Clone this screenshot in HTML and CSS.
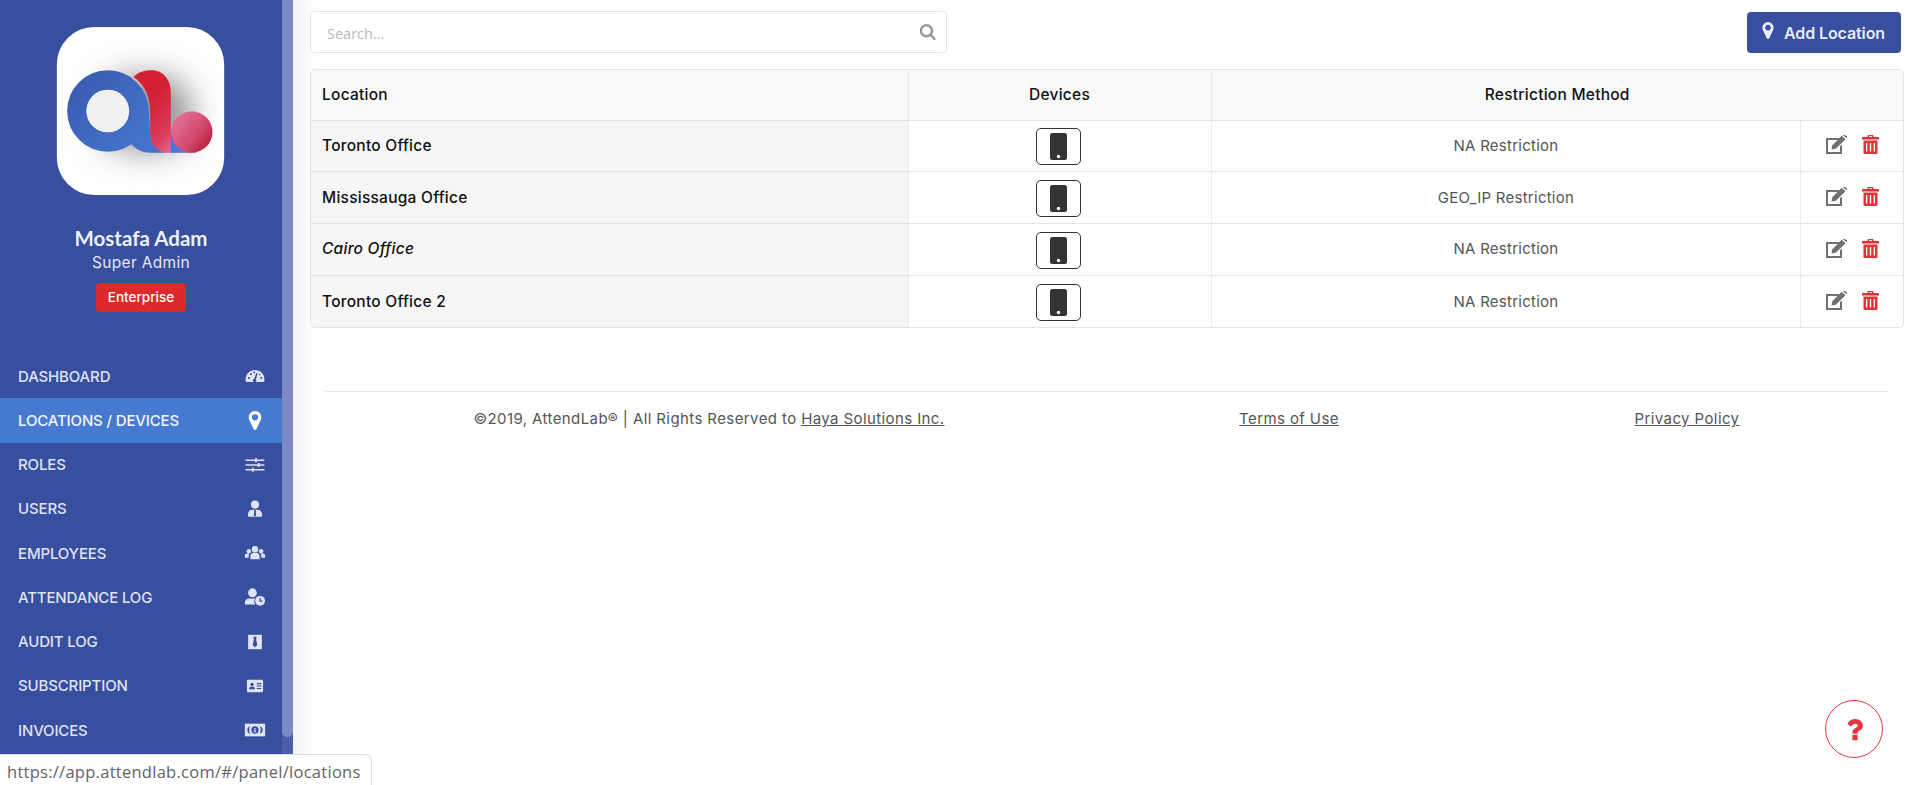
FILE: index.html
```html
<!DOCTYPE html>
<html lang="en">
<head>
<meta charset="utf-8">
<title>AttendLab - Locations</title>
<link rel="stylesheet" href="styles.css">
</head>
<body>
<svg class="defs" width="0" height="0" aria-hidden="true">
  <symbol id="i-marker" viewBox="384 128 1024 1536"><path d="M1152 640q0-106-75-181t-181-75-181 75-75 181 75 181 181 75 181-75 75-181zm256 0q0 109-33 179l-364 774q-16 33-47.500 52t-67.500 19-67.500-19-46.500-52l-365-774q-33-70-33-179 0-212 150-362t362-150 362 150 150 362z"/></symbol>
  <symbol id="i-edit" viewBox="0 0 21 19"><path class="edit-box" d="M13.500 4H1v14h14V10.500"/><path d="M5.500 14.500l.6-4L15.600.8l3.900 3.400-9.700 9.600zM16.700 0l3.800 3.300.5-.6c.2-.5.100-1-.3-1.400L18.800-.1c-.4-.3-.9-.3-1.300.1z"/></symbol>
  <symbol id="i-trash" viewBox="0 0 17 19"><path fill-rule="evenodd" d="M5.500 2V1C5.500.4 6 0 6.500 0h4c.6 0 1 .4 1 1v1H16c.6 0 1 .4 1 1v1.500H0V3c0-.6.4-1 1-1zM7 2h3V1.300H7zM1.500 5.500h14V18c0 .6-.4 1-1 1h-12c-.6 0-1-.4-1-1zM4 8v8.500h1.300V8zM7.800 8v8.500h1.400V8zM11.700 8v8.500H13V8z"/></symbol>
  <symbol id="i-phone" viewBox="0 0 17 27"><rect width="17" height="27" rx="2.500"/><circle cx="8.500" cy="23.500" r="1.700" fill="#fff"/></symbol>
</svg>

<div class="app">
  <aside class="sidebar">
    <div class="sidebar-inner">
      <header class="profile">
        <svg class="logo" viewBox="20 20 502 504">
          <defs>
            <clipPath id="logo-clip"><rect x="20" y="20" width="502" height="504" rx="112"/></clipPath>
            <filter id="logo-blur" x="-50%" y="-70%" width="200%" height="240%"><feGaussianBlur stdDeviation="48"/></filter>
            <linearGradient id="g-red" x1="0" y1="0" x2="0.7" y2="1"><stop offset="0.35" stop-color="#d41f35"/><stop offset="0.75" stop-color="#d93a58"/><stop offset="1" stop-color="#e4709a"/></linearGradient>
            <linearGradient id="g-bottom" x1="0" y1="0" x2="1" y2="0"><stop offset="0" stop-color="#4270cc"/><stop offset="0.6" stop-color="#4679dc"/><stop offset="1" stop-color="#e070a0"/></linearGradient>
            <linearGradient id="g-ball" x1="0.1" y1="0.2" x2="0.95" y2="0.85"><stop offset="0.15" stop-color="#dd678d"/><stop offset="0.6" stop-color="#d2486a"/><stop offset="1" stop-color="#b71a3a"/></linearGradient>
            <linearGradient id="g-ring" x1="0" y1="0" x2="1" y2="1"><stop offset="0" stop-color="#3a5cb2"/><stop offset="1" stop-color="#4374ca"/></linearGradient>
          </defs>
          <rect x="20" y="20" width="502" height="504" rx="112" fill="#fff"/>
          <g clip-path="url(#logo-clip)">
            <rect x="150" y="170" width="270" height="220" rx="90" fill="#8f8f8f" filter="url(#logo-blur)"/>
          </g>
          <path d="M250 170C265 155 285 150 305 150C340 150 362 180 362 215V335L425 397H345C320 397 300 375 300 340V270C300 225 280 190 250 170Z" fill="url(#g-red)"/>
          <path d="M230 190L295 262L300 340C300 375 320 397 350 397H300C280 397 258 390 240 368Z" fill="#4272cc"/>
          <path d="M300 340C300 375 325 397 350 397H440V397L362 335V397H345C320 397 300 375 300 340Z" fill="url(#g-bottom)"/>
          <circle cx="173" cy="272" r="93" fill="none" stroke="url(#g-ring)" stroke-width="58"/>
          <circle cx="173" cy="272" r="64" fill="#f1f1f1"/>
          <circle cx="425" cy="335" r="62" fill="url(#g-ball)"/>
        </svg>
        <div class="profile-name">Mostafa Adam</div>
        <div class="profile-role">Super Admin</div>
        <span class="plan-badge">Enterprise</span>
      </header>

      <nav class="nav">
        <a class="nav-item"><span>DASHBOARD</span>
          <svg class="nav-icon" viewBox="-2 -2 28 28"><path d="M12 4.500C5.400 4.500 0 9.800 0 16.400v1.600c0 .9.700 1.500 1.500 1.500h21c.8 0 1.500-.6 1.500-1.500v-1.600C24 9.800 18.600 4.500 12 4.500z"/><g class="nav-cut"><path d="M13.800 8.300l-2.900 7.400a2.100 2.100 0 1 0 2.200.8l2.300-7.600z"/><circle cx="4.200" cy="14.500" r="1.300"/><circle cx="6.700" cy="9.800" r="1.300"/><circle cx="11" cy="7.500" r="1.100"/><circle cx="19.800" cy="14.500" r="1.300"/><circle cx="17.800" cy="10.200" r="1"/></g></svg></a>
        <a class="nav-item is-active"><span>LOCATIONS / DEVICES</span>
          <svg class="nav-icon nav-icon-pin"><use href="#i-marker"/></svg></a>
        <a class="nav-item"><span>ROLES</span>
          <svg class="nav-icon" viewBox="-2 -2 28 28"><path d="M0 5h24v2H0zM0 11h24v2H0zM0 17h24v2H0z"/><path d="M12 3.500h2.500v5H12zM15.500 9.500H18v5h-2.500zM8 15.500h2.500v5H8z"/></svg></a>
        <a class="nav-item"><span>USERS</span>
          <svg class="nav-icon" viewBox="-3 -3 30 30"><circle cx="12" cy="6" r="5.500"/><path d="M2.500 22.500v-3.800c0-3.200 2.600-5.700 5.800-5.700h7.400c3.200 0 5.800 2.500 5.800 5.700v3.800z"/><path class="nav-cut" d="M11 13h2l.4 2-.4.800.6 5-1.600 1.700-1.600-1.700.6-5-.4-.8z"/></svg></a>
        <a class="nav-item"><span>EMPLOYEES</span>
          <svg class="nav-icon" viewBox="-1 -1 26 26"><circle cx="12" cy="7.500" r="3.800"/><circle cx="4.700" cy="10" r="2.600"/><circle cx="19.300" cy="10" r="2.600"/><path d="M6.500 19.500v-3.300c0-3 2-4.400 4-4.400h3c2 0 4 1.400 4 4.400v3.300zM0 17.500v-2.400c0-1.800 1.200-2.600 2.500-2.600h2.900c-.6.900-.9 2-.9 3.400v1.600zM24 17.500v-2.400c0-1.800-1.200-2.600-2.500-2.600h-2.900c.6.900.9 2 .9 3.400v1.600z"/></svg></a>
        <a class="nav-item"><span>ATTENDANCE LOG</span>
          <svg class="nav-icon" viewBox="-1 -1 26 26"><circle cx="9" cy="7" r="5.200"/><path d="M0 21v-2.300c0-2.800 2.300-5 5-5h7a8 8 0 0 0 .2 7.300z"/><circle cx="18" cy="16.500" r="5.800"/><path class="nav-cut-line" d="M18 13.300v3.500h2.800"/></svg></a>
        <a class="nav-item"><span>AUDIT LOG</span>
          <svg class="nav-icon" viewBox="-4 -4 32 32"><path d="M2 1.500h20v21H2z"/><path class="nav-cut" d="M9.500 4.500h5l-1 3 1.800 9-3.300 3-3.300-3 1.800-9z"/></svg></a>
        <a class="nav-item"><span>SUBSCRIPTION</span>
          <svg class="nav-icon" viewBox="-3 -3 30 30"><rect x="1" y="3.500" width="22" height="17" rx="1.500"/><g class="nav-cut"><circle cx="8" cy="9.800" r="2.300"/><path d="M4 16.500c0-2.500 1.500-3.700 4-3.700s4 1.200 4 3.700zM14.500 8h6v1.500h-6zM14.500 11.300h6v1.500h-6zM14.500 14.600h6v1.500h-6z"/></g></svg></a>
        <a class="nav-item"><span>INVOICES</span>
          <svg class="nav-icon" viewBox="-1 -1 26 26"><path d="M0 4.500h24v15H0z"/><g class="nav-cut"><path d="M3 12c0-2.500 1-3.800 4-4.700-1.500 1.200-1.800 3-1.800 4.700s.3 3.500 1.800 4.700C4 15.800 3 14.500 3 12zM21 12c0-2.500-1-3.800-4-4.700 1.500 1.200 1.800 3 1.800 4.700s-.3 3.500-1.800 4.700c3-.9 4-2.200 4-4.700z"/><circle cx="12" cy="12" r="4.300"/></g><path d="M11.200 9.700h1.400v4.200h.8v.8h-3v-.8h.8z"/></svg></a>
      </nav>
      <div class="nav-end"></div>
    </div>
    <div class="scrollbar"><div class="scrollbar-thumb"></div></div>
  </aside>

  <main class="main">
    <div class="toolbar">
      <label class="search">
        <input class="search-input" type="text" placeholder="Search...">
        <svg class="search-icon" viewBox="128 128 1600 1664"><path d="M1216 832q0-185-131.500-316.500t-316.500-131.500-316.500 131.500-131.500 316.500 131.500 316.500 316.500 131.500 316.500-131.500 131.500-316.500zm512 832q0 52-38 90t-90 38q-54 0-90-38l-343-342q-179 124-399 124-143 0-273.500-55.500t-225-150-150-225-55.500-273.500 55.500-273.500 150-225 225-150 273.500-55.500 273.500 55.500 225 150 150 225 55.500 273.500q0 220-124 399l343 343q37 37 37 90z"/></svg>
      </label>
      <button class="add-btn" type="button">
        <svg class="add-icon"><use href="#i-marker"/></svg>
        Add Location
      </button>
    </div>

    <div class="table-wrap">
      <table class="table">
        <colgroup><col class="col-loc"><col class="col-dev"><col class="col-res"><col class="col-act"></colgroup>
        <thead>
          <tr><th class="th-left">Location</th><th>Devices</th><th colspan="2">Restriction Method</th></tr>
        </thead>
        <tbody>
          <tr>
            <td class="td-name">Toronto Office</td>
            <td class="td-center"><button class="phone-btn" type="button"><svg class="phone-icon"><use href="#i-phone"/></svg></button></td>
            <td class="td-center td-res">NA Restriction</td>
            <td class="td-actions"><svg class="act act-edit"><use href="#i-edit"/></svg><svg class="act act-trash"><use href="#i-trash"/></svg></td>
          </tr>
          <tr>
            <td class="td-name">Mississauga Office</td>
            <td class="td-center"><button class="phone-btn" type="button"><svg class="phone-icon"><use href="#i-phone"/></svg></button></td>
            <td class="td-center td-res">GEO_IP Restriction</td>
            <td class="td-actions"><svg class="act act-edit"><use href="#i-edit"/></svg><svg class="act act-trash"><use href="#i-trash"/></svg></td>
          </tr>
          <tr>
            <td class="td-name td-italic">Cairo Office</td>
            <td class="td-center"><button class="phone-btn" type="button"><svg class="phone-icon"><use href="#i-phone"/></svg></button></td>
            <td class="td-center td-res">NA Restriction</td>
            <td class="td-actions"><svg class="act act-edit"><use href="#i-edit"/></svg><svg class="act act-trash"><use href="#i-trash"/></svg></td>
          </tr>
          <tr>
            <td class="td-name">Toronto Office 2</td>
            <td class="td-center"><button class="phone-btn" type="button"><svg class="phone-icon"><use href="#i-phone"/></svg></button></td>
            <td class="td-center td-res">NA Restriction</td>
            <td class="td-actions"><svg class="act act-edit"><use href="#i-edit"/></svg><svg class="act act-trash"><use href="#i-trash"/></svg></td>
          </tr>
        </tbody>
      </table>
    </div>

    <footer class="footer">
      <div class="footer-cell">©2019, AttendLab® | All Rights Reserved to <a class="footer-link">Haya Solutions Inc.</a></div>
      <div class="footer-cell"><a class="footer-link">Terms of Use</a></div>
      <div class="footer-cell"><a class="footer-link">Privacy Policy</a></div>
    </footer>
  </main>
</div>

<button class="help" type="button" aria-label="Help">
  <svg class="help-icon" viewBox="384 256 1024 1280"><path d="M1088 1256v240q0 16-12 28t-28 12h-240q-16 0-28-12t-12-28v-240q0-16 12-28t28-12h240q16 0 28 12t12 28zm316-600q0 54-15.500 101t-35 76.500-55 59.500-57.500 43.500-61 35.500q-41 23-68.500 65t-27.500 67q0 17-12 32.500t-28 15.500h-240q-15 0-25.500-18.500t-10.500-37.500v-45q0-83 65-156.500t143-108.500q59-27 84-56t25-76q0-42-46.500-74t-107.500-32q-65 0-108 29-35 25-107 115-13 16-31 16-12 0-25-8l-164-125q-13-10-15.500-25t5.500-28q160-266 464-266 80 0 161 31t146 83 106 127.500 41 158.500z"/></svg>
</button>
<div class="status-bubble">https://app.attendlab.com/#/panel/locations</div>
</body>
</html>
```
FILE: styles.css
```css
* { box-sizing: border-box; }
html, body { height: 100%; }
body {
  margin: 0;
  background: #fff;
  color: #111;
  font-family: Inter, "Noto Sans", sans-serif;
  font-size: 14px;
  overflow: hidden;
}
.defs { position: absolute; }
.app { display: flex; height: 100vh; }

/* Sidebar */
.sidebar {
  position: relative;
  flex: 0 0 293px;
  background: #384e9f;
  overflow: hidden;
}
.sidebar-inner { width: 282px; height: 100%; }
.profile {
  display: flex;
  flex-direction: column;
  align-items: center;
  padding-top: 27px;
  height: 354px;
}
.logo { width: 169px; height: 168px; display: block; margin-left: -1px; }
.profile-name {
  margin-top: 31px;
  font: 700 20.500px/24px Lato, sans-serif;
  color: #eef0f9;
}
.profile-role {
  margin-top: 1px;
  font-size: 15.500px;
  line-height: 24px;
  letter-spacing: 0.3px;
  color: #e3e6f4;
}
.plan-badge {
  margin-top: 8px;
  width: 90px;
  height: 29px;
  border-radius: 4px;
  background: #dc2a2b;
  color: #fff;
  font-size: 13.500px;
  font-weight: 500;
  line-height: 29px;
  text-align: center;
}
.nav-item {
  display: flex;
  align-items: center;
  justify-content: space-between;
  height: 44.250px;
  padding: 0 16px 0 18px;
  color: #dfe3f3;
  font-size: 15px;
  font-weight: 500;
  letter-spacing: -0.15px;
}
.nav-item.is-active { background: #467ad1; color: #f4f6fc; }
.nav-icon { width: 22px; height: 22px; fill: #dfe3f3; display: block; }
.nav-icon-pin { fill: #fff; width: 16px; height: 19px; margin-right: 3px; }
.nav-cut { fill: #384e9f; }
.nav-cut-line { fill: none; stroke: #384e9f; stroke-width: 1.500; }
.nav-end { height: 3px; margin-top: 4px; background: #dc1c36; }
.scrollbar {
  position: absolute;
  top: 0;
  right: 0;
  width: 11px;
  height: 100%;
  background: #4b5ea8;
}
.scrollbar-thumb {
  height: 737px;
  border-radius: 0 0 6px 6px;
  background: #7b89c4;
}

/* Main */
.main {
  flex: 1;
  min-width: 0;
  padding: 11px 7px 0 17px;
  background: linear-gradient(to right, #f2f2f2, #fff 22px);
}
.toolbar {
  display: flex;
  justify-content: space-between;
  align-items: flex-start;
  padding-right: 3px;
}
.search { position: relative; display: block; width: 637px; height: 42px; }
.search-input {
  display: block;
  width: 100%;
  height: 100%;
  padding: 3px 16px 0;
  border: 1px solid #e3e3e3;
  border-radius: 4px;
  outline: 0;
  background: #fff;
  font: 14.500px "Open Sans", sans-serif;
}
.search-input::placeholder { color: #b9b9b9; opacity: 1; }
.search-icon {
  position: absolute;
  top: 13px;
  right: 11px;
  width: 16px;
  height: 16px;
  fill: #999;
}
.add-btn {
  display: flex;
  align-items: center;
  gap: 10px;
  width: 154px;
  height: 41px;
  margin-top: 1px;
  padding: 0 0 0 15px;
  border: 0;
  border-radius: 4px;
  background: #384e9f;
  color: #e8ebf6;
  font: 600 16px Inter, sans-serif;
  letter-spacing: -0.1px;
}
.add-icon { width: 12px; height: 17px; fill: #e8ebf6; margin-top: -4px; flex: none; }

/* Table */
.table-wrap {
  margin-top: 16px;
  border: 1px solid #e4e4e4;
  border-radius: 5px;
  overflow: hidden;
}
.table {
  width: 100%;
  table-layout: fixed;
  border-collapse: collapse;
}
.col-loc { width: 597px; }
.col-dev { width: 303px; }
.col-act { width: 102px; }
th, td {
  padding: 0;
  border-left: 1px solid #ebebeb;
  border-top: 1px solid #e4e4e4;
  font-size: 15.500px;
  letter-spacing: 0.25px;
}
th:first-child, td:first-child { border-left: 0; }
thead th { border-top: 0; height: 50px; background: #f8f9fb; font-weight: 500; color: #111; }
.th-left { text-align: left; padding-left: 11px; }
tbody td { height: 51.800px; padding-bottom: 1px; }
.td-name { background: #f6f6f6; padding-left: 11px; font-weight: 500; color: #111; }
.td-italic { font-style: italic; }
.td-center { text-align: center; }
.td-res { color: #555; font-size: 15px; letter-spacing: 0.25px; }
.phone-btn {
  display: inline-flex;
  align-items: center;
  justify-content: center;
  vertical-align: middle;
  width: 45px;
  height: 37px;
  margin: 3px 3px 0 0;
  padding: 0;
  border: 1px solid #333;
  border-radius: 5px;
  background: #fff;
}
.phone-icon { width: 17px; height: 27px; fill: #333; }
.td-actions { padding-left: 25px; white-space: nowrap; font-size: 0; line-height: 0; }
.act { display: inline-block; vertical-align: middle; height: 19px; margin-top: -1px; }
.act-edit { width: 21px; fill: #707070; margin-right: 15px; }
.edit-box { fill: none; stroke: #707070; stroke-width: 2; }
.act-trash { width: 17px; fill: #e2323a; }

/* Footer */
.footer {
  display: grid;
  grid-template-columns: 768fr 392fr 404fr;
  margin: 63px 15px 0;
  padding-top: 12px;
  border-top: 1px solid #e6e6e6;
  color: #555;
  font-size: 15px;
  letter-spacing: 0.4px;
  line-height: 30px;
  text-align: center;
}
.footer-link { text-decoration: underline; }

/* Overlays */
.help {
  position: fixed;
  left: 1825px;
  top: 700px;
  display: flex;
  align-items: center;
  justify-content: center;
  width: 58px;
  height: 58px;
  padding: 0;
  border: 1.500px solid #e2383f;
  border-radius: 50%;
  background: #fff;
}
.help-icon { width: 17px; height: 23px; fill: #e2383f; }
.status-bubble {
  position: fixed;
  left: 0;
  bottom: 0;
  width: 372px;
  height: 31px;
  padding: 6px 0 0 7px;
  border: 1px solid #dadce0;
  border-width: 1px 1px 0 0;
  border-radius: 0 7px 0 0;
  background: #fff;
  color: #5f6368;
  font: 16.500px/22px "Open Sans", sans-serif;
  letter-spacing: 0.27px;
  white-space: nowrap;
}
```
